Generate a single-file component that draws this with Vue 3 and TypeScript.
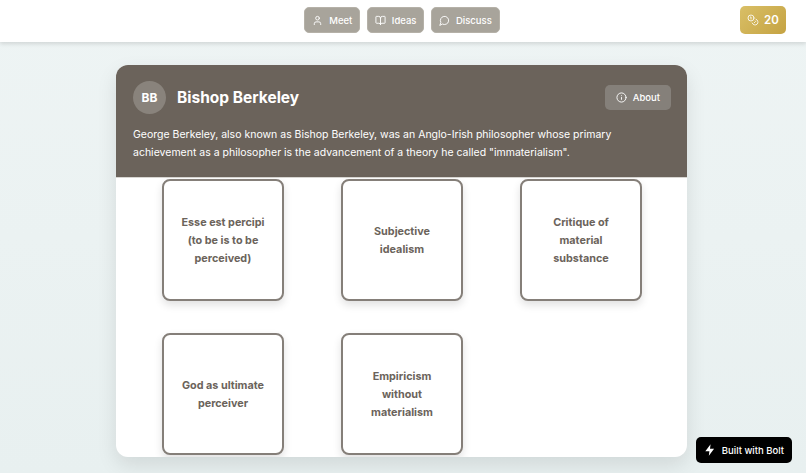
<script setup lang="ts">
interface Concept {
  id: number
  title: string
}

const concepts: Concept[] = [
  { id: 1, title: 'Esse est percipi (to be is to be perceived)' },
  { id: 2, title: 'Subjective idealism' },
  { id: 3, title: 'Critique of material substance' },
  { id: 4, title: 'God as ultimate perceiver' },
  { id: 5, title: 'Empiricism without materialism' }
]
</script>

<template>
  <div class="page">
    <!-- Top nav -->
    <header class="topbar">
      <nav class="nav">
        <button class="nav-btn">
          <svg class="icon" viewBox="0 0 24 24"><path d="M19 21v-2a4 4 0 0 0-4-4H9a4 4 0 0 0-4 4v2" /><circle cx="12" cy="7" r="4" /></svg>
          Meet
        </button>
        <button class="nav-btn">
          <svg class="icon" viewBox="0 0 24 24"><path d="M12 7v14" /><path d="M3 18a1 1 0 0 1-1-1V4a1 1 0 0 1 1-1h5a4 4 0 0 1 4 4 4 4 0 0 1 4-4h5a1 1 0 0 1 1 1v13a1 1 0 0 1-1 1h-6a3 3 0 0 0-3 3 3 3 0 0 0-3-3z" /></svg>
          Ideas
        </button>
        <button class="nav-btn">
          <svg class="icon" viewBox="0 0 24 24"><path d="M7.9 20A9 9 0 1 0 4 16.1L2 22Z" /></svg>
          Discuss
        </button>
      </nav>
      <div class="coins">
        <svg class="icon coin-icon" viewBox="0 0 24 24"><circle cx="8" cy="8" r="6" /><path d="M18.09 10.37A6 6 0 1 1 10.34 18" /><path d="M7 6h1v4" /><path d="m16.71 13.88.7.71-2.82 2.82" /></svg>
        20
      </div>
    </header>

    <main class="content">
      <section class="panel">
        <div class="panel-head">
          <div class="head-row">
            <div class="who">
              <div class="avatar">BB</div>
              <h1 class="name">Bishop Berkeley</h1>
            </div>
            <button class="about-btn">
              <svg class="icon" viewBox="0 0 24 24"><circle cx="12" cy="12" r="10" /><path d="M12 16v-4" /><path d="M12 8h.01" /></svg>
              About
            </button>
          </div>
          <p class="bio">George Berkeley, also known as Bishop Berkeley, was an Anglo-Irish philosopher whose primary achievement as a philosopher is the advancement of a theory he called "immaterialism".</p>
        </div>

        <div class="grid">
          <article v-for="c in concepts" :key="c.id" class="card">{{ c.title }}</article>
        </div>
      </section>
    </main>

    <a class="bolt" href="#">
      <svg class="bolt-icon" viewBox="0 0 24 24"><path d="M13 2 4 14h7l-1 8 9-12h-7z" /></svg>
      Built with Bolt
    </a>
  </div>
</template>

<style>
html,
body {
  margin: 0;
  height: 100%;
  overflow: hidden;
  background: #e9f1f1;
}
</style>

<style scoped>
.page {
  position: relative;
  height: 473px;
  overflow: hidden;
  font-family: Inter, "Liberation Sans", sans-serif;
  background: linear-gradient(to bottom, #eef4f4, #e8f0f0);
}

.topbar {
  position: relative;
  height: 42px;
  box-sizing: border-box;
  padding: 0 2px 2px 0;
  display: flex;
  align-items: center;
  justify-content: center;
  background: #fff;
  box-shadow: 0 2px 4px rgba(0, 0, 0, 0.12);
}

.nav {
  display: flex;
  gap: 6.5px;
}

.nav-btn {
  display: flex;
  align-items: center;
  gap: 6px;
  height: 26px;
  padding: 0 7px;
  border: 1px solid #b5b1a8;
  border-radius: 5px;
  background: #a8a49b;
  color: #fff;
  font: 500 9.5px Inter, sans-serif;
}

.icon {
  width: 11px;
  height: 11px;
  fill: none;
  stroke: currentColor;
  stroke-width: 2;
  stroke-linecap: round;
  stroke-linejoin: round;
}

.coin-icon {
  width: 12px;
  height: 12px;
  opacity: 0.85;
}

.coins {
  position: absolute;
  top: 6px;
  right: 20px;
  width: 46px;
  height: 28px;
  display: flex;
  align-items: center;
  justify-content: center;
  gap: 5px;
  border-radius: 5px;
  background: linear-gradient(135deg, #d9bf66, #c5a343);
  color: #fff;
  font-size: 11.5px;
  font-weight: 600;
}

.content {
  display: flex;
  justify-content: center;
  padding: 23px 3px 0 0;
}

.panel {
  width: 571px;
  height: 392px;
  border-radius: 12px;
  overflow: hidden;
  background: #fff;
  box-shadow: 0 8px 20px rgba(0, 0, 0, 0.1);
}

.panel-head {
  height: 113px;
  box-sizing: border-box;
  padding: 16px 16px 0 17px;
  background: #6b635b;
  border-bottom: 1px solid #d8d6d2;
  color: #fff;
}

.head-row {
  display: flex;
  align-items: center;
  justify-content: space-between;
}

.who {
  display: flex;
  align-items: center;
  gap: 11px;
}

.avatar {
  width: 33px;
  height: 33px;
  display: flex;
  align-items: center;
  justify-content: center;
  border-radius: 50%;
  background: #89837c;
  font-size: 12px;
  font-weight: 700;
}

.name {
  margin: 0;
  font-size: 15.5px;
  font-weight: 700;
}

.about-btn {
  display: flex;
  align-items: center;
  gap: 6px;
  height: 25px;
  padding: 0 11px;
  border: none;
  border-radius: 5px;
  background: #85807a;
  color: #fff;
  font: 500 9.5px Inter, sans-serif;
}

.bio {
  margin: 12px 0 0;
  font-size: 10.5px;
  line-height: 18px;
}

.grid {
  display: grid;
  grid-template-columns: repeat(3, 122px);
  grid-auto-rows: 122px;
  column-gap: 57px;
  row-gap: 32px;
  padding: 1px 46px 0;
}

.card {
  display: flex;
  align-items: center;
  justify-content: center;
  box-sizing: border-box;
  padding: 1px 16px 0;
  border: 2px solid #857f79;
  border-radius: 8px;
  background: #fff;
  box-shadow: 0 4px 8px rgba(0, 0, 0, 0.12);
  color: #6b635b;
  font-size: 10.8px;
  font-weight: 700;
  line-height: 18px;
  text-align: center;
}

.bolt {
  position: absolute;
  right: 14px;
  bottom: 10px;
  display: flex;
  align-items: center;
  gap: 5px;
  height: 26px;
  padding: 0 8px 0 7px;
  border-radius: 5px;
  background: #000;
  color: #fff;
  font-size: 9.5px;
  font-weight: 500;
  text-decoration: none;
}

.bolt-icon {
  width: 14px;
  height: 14px;
  fill: #fff;
}
</style>
